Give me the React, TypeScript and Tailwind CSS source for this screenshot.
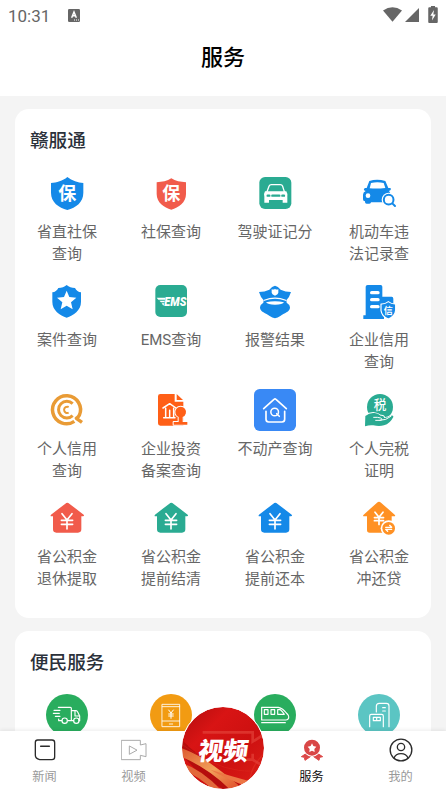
import type { ReactNode } from "react";
import clsx from "clsx";

const BLUE = "#1489e8";
const RED = "#f15b4b";
const GREEN = "#2aab92";
const ORANGE = "#ff9124";

const Icon = ({ children }: { children: ReactNode }) => (
  <svg viewBox="0 0 126 126" className="block size-[42px] shrink-0" fill="none" strokeLinecap="round" strokeLinejoin="round">
    {children}
  </svg>
);

const Yen = ({ x, y, scale = 1, width = 5 }: { x: number; y: number; scale?: number; width?: number }) => (
  <path
    d="M-15-23 0-4 15-23M0-4V23M-17-3H17M-17 9H17"
    transform={`translate(${x} ${y}) scale(${scale})`}
    stroke="#fff"
    strokeWidth={width}
  />
);

const ShieldBao = ({ color, small }: { color: string; small?: boolean }) => (
  <Icon>
    <path
      d={
        small
          ? "M64 19C52 27 36 30 20 31V66C20 92 42 106 64 113C86 106 108 92 108 66V31C92 30 76 27 64 19Z"
          : "M64 15C50 27 32 32 15 33V62C15 91 38 107 64 114C90 107 112 91 112 62V33C96 32 78 27 64 15Z"
      }
      fill={color}
    />
    <text x="64" y="84" textAnchor="middle" fontSize="54" fontWeight="700" fill="#fff">
      保
    </text>
  </Icon>
);

const LicenseIcon = () => (
  <Icon>
    <rect x="16" y="15" width="96" height="96" rx="17" fill={GREEN} />
    <path d="M39 59 45 43Q47 38 52 38H79Q84 38 86 43L91 59" stroke="#fff" strokeWidth="4" />
    <path d="M33 58H97Q101 64 100 74V92H86V84H45V92H31V74Q29 64 33 58Z" fill="#fff" />
    <path d="M41 71H46M55 71H76M85 71H90" stroke={GREEN} strokeWidth="7" />
  </Icon>
);

const CarSearchIcon = () => (
  <Icon>
    <path
      d="M34 27Q57 20 82 27L91 48H97Q101 51 97 55L93 57Q98 62 98 72V91H39Q39 95 34 95H26Q21 95 21 90V88Q15 88 15 82V68Q15 61 23 57L18 55Q16 50 21 48H26Z"
      fill={BLUE}
    />
    <path d="M39 33Q58 29 77 33L82 48Q58 51 35 49Z" fill="#fff" />
    <circle cx="30" cy="71" r="7" fill="#fff" />
    <circle cx="92" cy="83" r="21" fill="#fff" />
    <circle cx="92" cy="83" r="14.5" stroke={BLUE} strokeWidth="6" />
    <path d="m103 94 8 8" stroke={BLUE} strokeWidth="6" />
  </Icon>
);

const CaseIcon = () => (
  <Icon>
    <path
      d="M62 15Q72 24 87 24 93 36 105 37V65C105 92 82 105 62 113C42 105 19 92 19 65V37Q31 36 37 24 52 24 62 15Z"
      fill={BLUE}
    />
    <path d="m62 32 8 19 21 2-16 14 5 21-18-11-18 11 5-21-16-14 21-2Z" fill="#fff" />
  </Icon>
);

const EmsIcon = () => (
  <Icon>
    <rect x="16" y="15" width="95" height="96" rx="15" fill={GREEN} />
    <path d="M20 53H47L45 59H25ZM28 62H45L43 67H33ZM35 70H43L40 77Z" fill="#fff" />
    <text
      x="43"
      y="79"
      fontSize="38"
      fontWeight="900"
      fontStyle="italic"
      fill="#fff"
      textLength="66"
      lengthAdjust="spacingAndGlyphs"
      className="font-[Roboto,sans-serif]"
    >
      EMS
    </text>
  </Icon>
);

const PoliceIcon = () => (
  <Icon>
    <path
      d="M63 17Q72 19 80 29 94 36 111 36 106 53 97 61L98 68Q108 74 108 82C108 97 90 99 79 108Q63 121 47 108C36 99 18 97 18 82Q18 74 28 68L29 61Q20 53 15 36 32 36 46 29 54 19 63 17Z"
      fill={BLUE}
    />
    <path d="M53 28Q60 30 63 26 66 30 73 28V38Q73 43 63 47 53 43 53 38Z" fill="#fff" />
    <path d="M31 61Q63 48 95 61" stroke="#fff" strokeWidth="3.500" />
    <path d="M36 67Q63 60 90 67 86 74 63 74 41 74 36 67Z" fill="#fff" />
  </Icon>
);

const EnterpriseIcon = () => (
  <Icon>
    <path d="M23 20Q23 15 29 15H68Q73 15 73 20V50H101Q106 50 106 56V105H78V117H16V106H23Z" fill={BLUE} />
    <path d="M41 38H60M41 59H60M41 80H60" stroke="#fff" strokeWidth="10" />
    <path
      d="M91 65Q101 73 113 72V91Q111 109 91 117 71 109 69 91V72Q81 73 91 65Z"
      fill={BLUE}
      stroke="#fff"
      strokeWidth="3.500"
    />
    <text x="91" y="101" textAnchor="middle" fontSize="27" fontWeight="700" fill="#fff">
      信
    </text>
  </Icon>
);

const CreditIcon = () => (
  <Icon>
    <g stroke="#e99b35" strokeLinecap="butt">
      <path d="M85 97A42 42 0 1 1 100 79Q97 85 91 88L108 100" strokeWidth="10.500" />
      <path d="M80 44A25 25 0 1 0 80 80" strokeWidth="9" />
      <path d="M68 54A9.500 9.500 0 1 0 68 71" strokeWidth="6" />
    </g>
  </Icon>
);

const InvestIcon = () => (
  <Icon>
    <path d="M31 15H74V38H100V110H31Q24 110 24 103V22Q24 15 31 15Z" fill="#ff5f17" />
    <path d="M80 15 99 33H80Z" fill="#ff5f17" />
    <path d="M39 57 59 44 78 57M47 58V84M59 64V84M71 58V84M41 86H75" stroke="#fff" strokeWidth="4.500" />
    <path
      d="M86 84A16 16 0 1 1 98 84V99H112V107H71V99H86Z"
      fill="#ff5f17"
      stroke="#fff"
      strokeWidth="6"
      paintOrder="stroke"
    />
  </Icon>
);

const EstateIcon = () => (
  <Icon>
    <rect width="126" height="126" rx="17" fill="#3989f5" />
    <path d="M29 59 60 31Q63 28 66 31L97 59M36 67V91Q36 99 44 99H84Q92 99 92 91V67" stroke="#fff" strokeWidth="5" />
    <circle cx="62" cy="69" r="11.500" stroke="#fff" strokeWidth="4.500" />
    <path d="m68 74 8 8" stroke="#fff" strokeWidth="4.500" />
  </Icon>
);

const TaxIcon = () => (
  <Icon>
    <circle cx="66" cy="54" r="39" fill={GREEN} />
    <text x="66" y="61" textAnchor="middle" fontSize="38" fontWeight="500" fill="#fff">
      税
    </text>
    <path
      d="M22 81Q35 70 50 72 60 73 68 80 78 79 79 87 91 86 99 80 107 78 106 84 96 104 78 109 64 113 46 109 35 107 21 112Z"
      fill={GREEN}
      stroke="#fff"
      strokeWidth="5"
      paintOrder="stroke"
    />
    <path d="M47 85Q59 84 68 87 77 92 66 94H53M66 94Q83 95 99 82" stroke="#fff" strokeWidth="3" />
  </Icon>
);

const HouseYen = ({ color }: { color: string }) => (
  <Icon>
    <path
      d="M58 20Q64 14 70 20L113 53Q116 57 111 58H106V97Q106 107 96 107H31Q21 107 21 97V58H16Q12 57 15 53Z"
      fill={color}
    />
    <Yen x={63} y={73} />
  </Icon>
);

const HouseLoan = () => (
  <Icon>
    <path
      d="M57 17Q63 11 69 17L110 53Q114 58 109 58H101V107H35Q27 107 27 99V58H18Q13 57 17 53Z"
      fill={ORANGE}
    />
    <Yen x={63} y={64} scale={0.8} width={6.5} />
    <circle cx="92" cy="94" r="24" fill="#fff" />
    <circle cx="92" cy="94" r="19" fill={ORANGE} />
    <path d="M83 91H101L95 85M101 97H83L89 103" stroke="#fff" strokeWidth="4" />
  </Icon>
);

const TruckIcon = () => (
  <Icon>
    <circle cx="63" cy="63" r="63" fill="#29ad5e" />
    <g stroke="#fff" strokeWidth="3.500">
      <path d="M37 40H73Q76 40 76 43V80M76 50H90Q93 50 95 54L101 66V80H99M83 80H66M47 80H38V75M24 49H42M22 58H40M28 67H42M87 50V66H100" />
      <circle cx="56" cy="80" r="8" />
      <circle cx="91" cy="80" r="8" />
    </g>
  </Icon>
);

const PhoneIcon = () => (
  <Icon>
    <circle cx="63" cy="63" r="63" fill="#f29b12" />
    <path d="M37 31H89V98H37ZM37 38H89M37 81H89M58 90H68" stroke="#fff" strokeWidth="3" strokeOpacity=".85" />
    <path d="m56 48 7 9 7-9M63 57V73M56 60H70M56 66H70" stroke="#fff" strokeWidth="3" />
  </Icon>
);

const TrainIcon = () => (
  <Icon>
    <circle cx="63" cy="63" r="63" fill="#29ad5e" />
    <path
      d="M23 40H73Q87 43 97 57 105 63 104 72 102 78 96 78H23ZM23 86H94M31 47H42V61H31ZM51 47H62V61H51ZM71 47H79Q86 52 91 61H71Z"
      stroke="#fff"
      strokeWidth="3.500"
    />
  </Icon>
);

const CityIcon = () => (
  <Icon>
    <circle cx="63" cy="63" r="63" fill="#5bc5c3" />
    <path
      d="M35 98V66Q35 61 40 61H71Q76 61 76 66V98M55 54V37Q55 28 64 28H85Q93 28 93 36V98M74 41H82M74 51H82M46 70H67V80H46ZM56 70V80"
      stroke="#fff"
      strokeWidth="3.500"
    />
  </Icon>
);

const services: { label: string[]; icon: ReactNode }[] = [
  { label: ["省直社保", "查询"], icon: <ShieldBao color={BLUE} /> },
  { label: ["社保查询"], icon: <ShieldBao color={RED} small /> },
  { label: ["驾驶证记分"], icon: <LicenseIcon /> },
  { label: ["机动车违", "法记录查"], icon: <CarSearchIcon /> },
  { label: ["案件查询"], icon: <CaseIcon /> },
  { label: ["EMS查询"], icon: <EmsIcon /> },
  { label: ["报警结果"], icon: <PoliceIcon /> },
  { label: ["企业信用", "查询"], icon: <EnterpriseIcon /> },
  { label: ["个人信用", "查询"], icon: <CreditIcon /> },
  { label: ["企业投资", "备案查询"], icon: <InvestIcon /> },
  { label: ["不动产查询"], icon: <EstateIcon /> },
  { label: ["个人完税", "证明"], icon: <TaxIcon /> },
  { label: ["省公积金", "退休提取"], icon: <HouseYen color={RED} /> },
  { label: ["省公积金", "提前结清"], icon: <HouseYen color={GREEN} /> },
  { label: ["省公积金", "提前还本"], icon: <HouseYen color={BLUE} /> },
  { label: ["省公积金", "冲还贷"], icon: <HouseLoan /> },
];

const StatusBar = () => (
  <div className="flex h-8 items-center pl-2 pr-[8px] text-[#666]">
    <span className="font-[Roboto,sans-serif] text-[17px] leading-8">10:31</span>
    <svg viewBox="0 0 36 39" className="ml-[18px] mb-[2px] h-[13px] w-3" fill="#666">
      <rect width="36" height="39" rx="4" />
      <path d="m11 26 7-17 7 17M14 20H22" fill="none" stroke="#fff" strokeWidth="4.500" />
      <path d="M18 33h3m3 0h3m3 0h3" stroke="#fff" strokeWidth="3" />
    </svg>
    <div className="ml-auto flex items-center">
      <svg viewBox="0 0 58 45" className="mb-[3px] h-[15px] w-[19px]" fill="#666">
        <path d="M0 10Q29-9 58 10L29 45Z" />
      </svg>
      <svg viewBox="0 0 42 42" className="mb-[2px] ml-[3px] size-[14px]" fill="#666">
        <path d="M42 0V42H0Z" />
      </svg>
      <svg viewBox="0 0 28 50" className="mb-[4px] ml-[9px] h-[17px] w-[10px]" fill="#666">
        <path d="M8 0H20V4H25Q28 4 28 7V47Q28 50 25 50H3Q0 50 0 47V7Q0 4 3 4H8Z" />
        <path d="M17 12 6 29H13L11 43 22 25H15Z" fill="#fff" />
      </svg>
    </div>
  </div>
);

const Card = ({ title, className, children }: { title: string; className?: string; children: ReactNode }) => (
  <section className={clsx("rounded-[14px] bg-white pt-[19px]", className)}>
    <h2 className="pl-[15px] text-[18.600px] leading-[26px] font-medium text-[#2b313a]">{title}</h2>
    <div className="mt-[18px] grid grid-cols-4">{children}</div>
  </section>
);

const NavItem = ({ label, active, children }: { label: string; active?: boolean; children: ReactNode }) => (
  <button className="flex flex-1 flex-col items-center pt-[6px]">
    <svg viewBox="0 0 78 78" className="size-[26px]" fill="none" strokeLinejoin="round" strokeLinecap="round">
      {children}
    </svg>
    <span className={clsx("mt-[4px] text-[12.200px] leading-[20px]", active ? "text-[#111]" : "text-[#999]")}>
      {label}
    </span>
  </button>
);

const VideoButton = () => (
  <button className="relative -mt-6 size-[82px] shrink-0 rounded-full outline outline-white">
    <svg viewBox="0 0 246 246" className="size-full">
      <defs>
        <clipPath id="disc">
          <circle cx="123" cy="123" r="123" />
        </clipPath>
        <linearGradient id="red" x1="0" y1="0" x2="1" y2="1">
          <stop offset="0" stopColor="#b00d0d" />
          <stop offset=".3" stopColor="#d81414" />
          <stop offset=".6" stopColor="#cd1010" />
          <stop offset="1" stopColor="#dc2018" />
        </linearGradient>
        <linearGradient id="gold" x1="0" y1="0" x2="1" y2="1">
          <stop offset="0" stopColor="#dd5a30" />
          <stop offset=".5" stopColor="#f2a05a" />
          <stop offset="1" stopColor="#dc4022" />
        </linearGradient>
        <filter id="soft">
          <feGaussianBlur stdDeviation="2" />
        </filter>
      </defs>
      <g clipPath="url(#disc)">
        <rect width="246" height="246" fill="url(#red)" />
        <g filter="url(#soft)">
          <path d="M0 100Q60 160 200 250H130Q40 200 0 140Z" fill="#b50c0c" />
          <path d="M0 124Q50 143 95 176 140 208 188 250H146Q85 187 0 150Z" fill="url(#gold)" />
          <path d="M0 168Q60 188 118 250H94Q50 206 0 188Z" fill="#e2683a" />
          <path d="M85 188Q150 208 214 226L196 238Q135 217 85 188Z" fill="#ec7644" />
        </g>
        <path d="M0 112Q90 180 170 190T246 165" fill="none" stroke="#e8402c" strokeWidth="1.500" opacity=".5" />
        <path d="M205 246Q195 190 246 140" fill="none" stroke="#ea3e2a" strokeWidth="4" opacity=".4" />
        <path d="M62 76H212V104L246 82M212 140V158L246 178M212 158H195" fill="none" stroke="#e34038" strokeWidth="8" opacity=".7" />
      </g>
      <text x="143" y="159" textAnchor="middle" fontSize="75" fontWeight="900" fill="#fff" transform="skewX(-8)">
        视频
      </text>
    </svg>
  </button>
);

export default function App() {
  return (
    <div className="relative flex h-[792px] w-[446px] flex-col overflow-hidden bg-[#f4f4f4] font-[Roboto,'Noto_Sans_CJK_SC',sans-serif]">
      <header className="h-24 shrink-0 bg-white">
        <StatusBar />
        <h1 className="mt-[10px] text-center text-[22px] leading-8 font-medium text-black">服务</h1>
      </header>

      <main className="flex h-[635px] shrink-0 flex-col gap-[13px] overflow-hidden px-[15px] pt-[13px]">
        <Card title="赣服通" className="h-[509px] shrink-0">
          {services.map((item) => (
            <div key={item.label.join("")} className="flex h-[108.400px] flex-col items-center">
              {item.icon}
              <div className="mt-[7px] text-center text-[15px] leading-[22px] text-[#666]">
                {item.label.map((line) => (
                  <div key={line}>{line}</div>
                ))}
              </div>
            </div>
          ))}
        </Card>
        <Card title="便民服务" className="h-[160px] shrink-0">
          {[<TruckIcon />, <PhoneIcon />, <TrainIcon />, <CityIcon />].map((icon, i) => (
            <div key={i} className="flex justify-center">
              {icon}
            </div>
          ))}
        </Card>
      </main>

      <nav className="relative flex h-[61px] shrink-0 items-start bg-white shadow-[0_-1px_4px_rgba(0,0,0,0.08)]">
        <div className="flex w-[182px] pr-1">
          <NavItem label="新闻">
            <path d="M17 9H60Q68 9 68 17V60Q68 68 60 68H23Q10 65 10 55V16Q10 9 17 9Z" stroke="#2b2b2b" strokeWidth="4" />
            <path d="M26 28H52" stroke="#2b2b2b" strokeWidth="4.500" />
          </NavItem>
          <NavItem label="视频">
            <path d="M2 10H58V24L75 20V59L58 55V68H2ZM25 28V52L47 40Z" stroke="#aaa" strokeWidth="3" />
          </NavItem>
        </div>
        <VideoButton />
        <div className="flex w-[182px] pl-[3px] pr-px">
          <NavItem label="服务" active>
            <path d="M24 48 7 59 16 61 18 70 34 59ZM54 48 71 59 62 61 60 70 44 59Z" fill="#dc4747" stroke="#dc4747" strokeWidth="3" />
            <circle cx="39" cy="32" r="27" fill="#fff" />
            <circle cx="39" cy="32" r="24" fill="#d94747" />
            <path d="m39 19 4 8 9 2-6 7 1 9-8-4-8 4 1-9-6-7 9-2Z" fill="#fff" />
          </NavItem>
          <NavItem label="我的">
            <circle cx="39" cy="39" r="32.500" stroke="#2b2b2b" strokeWidth="4" />
            <circle cx="39" cy="30" r="11" stroke="#2b2b2b" strokeWidth="4" />
            <path d="M18 63Q23 50 39 50T60 63" stroke="#2b2b2b" strokeWidth="4" />
          </NavItem>
        </div>
      </nav>
    </div>
  );
}
